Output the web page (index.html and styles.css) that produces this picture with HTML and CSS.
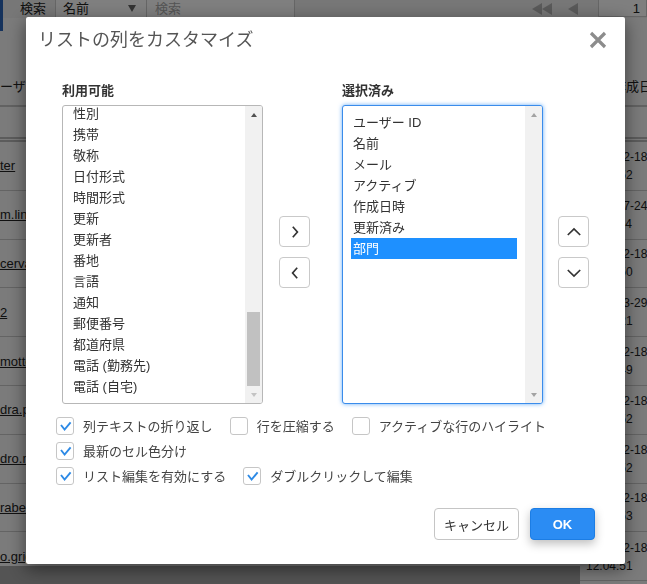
FILE: index.html
```html
<!DOCTYPE html>
<html lang="ja">
<head>
<meta charset="utf-8">
<title>リストの列をカスタマイズ</title>
<link rel="stylesheet" href="styles.css">
</head>
<body>
<div class="page">
  <div class="toolbar">
    <span class="tb-edge"></span>
    <span class="tb-label">検索</span>
    <span class="tb-select">名前<span class="tb-caret"></span></span>
    <span class="tb-input">検索</span>
    <span class="tb-spacer"></span>
    <span class="tb-pager"><span class="tri"></span><span class="tri"></span><span class="tri single"></span></span>
    <span class="tb-page">1</span>
  </div>
  <div class="grid">
    <div class="pane pane-left">
      <div class="g-head">ーザー名</div>
      <div class="g-filter"></div>
      <div class="g-rows">
        <div class="g-row"><a class="lnk">ter</a></div>
        <div class="g-row"><a class="lnk">m.linden</a></div>
        <div class="g-row"><a class="lnk">cervantes</a></div>
        <div class="g-row"><a class="lnk">2</a></div>
        <div class="g-row"><a class="lnk">mottola</a></div>
        <div class="g-row"><a class="lnk">dra.perez</a></div>
        <div class="g-row"><a class="lnk">dro.martin</a></div>
        <div class="g-row"><a class="lnk">rabecca</a></div>
        <div class="g-row"><a class="lnk">o.grigoryan</a></div>
      </div>
      <div class="hscroll"></div>
    </div>
    <div class="pane pane-right">
      <div class="g-head g-head-r">作成日時</div>
      <div class="g-filter"></div>
      <div class="g-row"><span class="dt">2022-12-18<br>12:04:52</span></div>
      <div class="g-row"><span class="dt">2022-07-24<br>10:11:44</span></div>
      <div class="g-row"><span class="dt">2022-12-18<br>12:04:50</span></div>
      <div class="g-row"><span class="dt">2022-03-29<br>09:15:21</span></div>
      <div class="g-row"><span class="dt">2022-12-18<br>12:04:49</span></div>
      <div class="g-row"><span class="dt">2022-12-18<br>12:04:52</span></div>
      <div class="g-row"><span class="dt">2022-12-18<br>12:04:52</span></div>
      <div class="g-row"><span class="dt">2022-12-18<br>12:04:53</span></div>
      <div class="g-row g-row-last"><span class="dt">2022-12-18<br>12:04:51</span></div>
    </div>
  </div>
</div>

<div class="overlay"></div>

<div class="modal" role="dialog" aria-labelledby="m-title">
  <div class="m-head">
    <h2 class="m-title" id="m-title">リストの列をカスタマイズ</h2>
    <button class="m-close" aria-label="閉じる">
      <svg width="18" height="18" viewBox="0 0 18 18"><path d="M2 2L16 16M16 2L2 16" stroke="#8c8c8c" stroke-width="3.2" fill="none"/></svg>
    </button>
  </div>

  <div class="m-body">
    <div class="pickers">
      <div class="pick">
        <div class="pick-label">利用可能</div>
        <div class="listbox">
          <ul class="opts opts-scrolled">
            <li>性別</li>
            <li>携帯</li>
            <li>敬称</li>
            <li>日付形式</li>
            <li>時間形式</li>
            <li>更新</li>
            <li>更新者</li>
            <li>番地</li>
            <li>言語</li>
            <li>通知</li>
            <li>郵便番号</li>
            <li>都道府県</li>
            <li>電話 (勤務先)</li>
            <li>電話 (自宅)</li>
          </ul>
          <div class="vscroll">
            <span class="arr"><span class="tri-up on"></span></span>
            <span class="track"><span class="thumb"></span></span>
            <span class="arr"><span class="tri-down"></span></span>
          </div>
        </div>
      </div>

      <div class="movebtns">
        <button class="iconbtn" aria-label="追加">
          <svg width="12" height="12" viewBox="0 0 12 12"><polyline points="3.8,0.8 8.4,6 3.8,11.2" fill="none" stroke="#333" stroke-width="1.7"/></svg>
        </button>
        <button class="iconbtn" aria-label="削除">
          <svg width="12" height="12" viewBox="0 0 12 12"><polyline points="8.2,0.8 3.6,6 8.2,11.2" fill="none" stroke="#333" stroke-width="1.7"/></svg>
        </button>
      </div>

      <div class="pick pick-right">
        <div class="pick-label">選択済み</div>
        <div class="listbox focused">
          <ul class="opts opts-top">
            <li>ユーザー ID</li>
            <li>名前</li>
            <li>メール</li>
            <li>アクティブ</li>
            <li>作成日時</li>
            <li>更新済み</li>
            <li class="sel">部門</li>
          </ul>
          <div class="vscroll">
            <span class="arr"><span class="tri-up"></span></span>
            <span class="track"></span>
            <span class="arr"><span class="tri-down dim"></span></span>
          </div>
        </div>
      </div>

      <div class="orderbtns">
        <button class="iconbtn" aria-label="上へ">
          <svg width="14" height="12" viewBox="0 0 14 12"><polyline points="0.8,9 7,3 13.2,9" fill="none" stroke="#333" stroke-width="1.7"/></svg>
        </button>
        <button class="iconbtn" aria-label="下へ">
          <svg width="14" height="12" viewBox="0 0 14 12"><polyline points="0.8,3 7,9 13.2,3" fill="none" stroke="#333" stroke-width="1.7"/></svg>
        </button>
      </div>
    </div>

    <div class="checks">
      <div class="check-row">
        <label class="chk"><span class="box"><svg width="16" height="16" viewBox="0 0 16 16"><polyline points="4,7 7.6,11.6 13.6,4.4" fill="none" stroke="#2d8ae6" stroke-width="1.9"/></svg></span>列テキストの折り返し</label>
        <label class="chk"><span class="box"></span>行を圧縮する</label>
        <label class="chk"><span class="box"></span>アクティブな行のハイライト</label>
      </div>
      <div class="check-row">
        <label class="chk"><span class="box"><svg width="16" height="16" viewBox="0 0 16 16"><polyline points="4,7 7.6,11.6 13.6,4.4" fill="none" stroke="#2d8ae6" stroke-width="1.9"/></svg></span>最新のセル色分け</label>
      </div>
      <div class="check-row">
        <label class="chk"><span class="box"><svg width="16" height="16" viewBox="0 0 16 16"><polyline points="4,7 7.6,11.6 13.6,4.4" fill="none" stroke="#2d8ae6" stroke-width="1.9"/></svg></span>リスト編集を有効にする</label>
        <label class="chk"><span class="box"><svg width="16" height="16" viewBox="0 0 16 16"><polyline points="4,7 7.6,11.6 13.6,4.4" fill="none" stroke="#2d8ae6" stroke-width="1.9"/></svg></span>ダブルクリックして編集</label>
      </div>
    </div>
  </div>

  <div class="m-foot">
    <button class="btn btn-cancel">キャンセル</button>
    <button class="btn btn-ok">OK</button>
  </div>
</div>
</body>
</html>
```

FILE: styles.css
```css
* { box-sizing: border-box; }

html, body {
  margin: 0;
  padding: 0;
}

body {
  width: 647px;
  height: 584px;
  overflow: hidden;
  font-family: "Liberation Sans", "Noto Sans CJK JP", sans-serif;
  font-size: 13px;
  color: #333;
  background: #f6f6f6;
}

/* ---------- background page ---------- */
.page {
  width: 647px;
  height: 584px;
  background: #f6f6f6;
  display: flex;
  flex-direction: column;
  overflow: hidden;
}

.toolbar {
  display: flex;
  align-items: flex-start;
  height: 18px;
  flex: none;
  background: #eee;
  font-size: 13px;
  line-height: 17px;
}

.tb-edge {
  width: 3px;
  height: 31px;
  background: #2a64b8;
  flex: none;
}

.tb-label {
  margin-left: 17px;
  width: 35px;
  color: #222;
}

.tb-select {
  width: 92px;
  height: 17px;
  padding-left: 7px;
  border-left: 1px solid #ccc;
  border-right: 1px solid #ccc;
  background: #fff;
  color: #222;
  display: flex;
  align-items: center;
}

.tb-caret {
  margin-left: auto;
  margin-right: 10px;
  width: 0;
  height: 0;
  border-left: 4px solid transparent;
  border-right: 4px solid transparent;
  border-top: 7px solid #666;
}

.tb-input {
  width: 148px;
  height: 17px;
  padding-left: 8px;
  border-right: 1px solid #ccc;
  background: #fff;
  color: #aaa;
}

.tb-spacer { flex: 1; }

.tb-pager {
  display: flex;
  align-items: center;
  height: 17px;
  margin-right: 20px;
}

.tri {
  width: 0;
  height: 0;
  border-top: 6px solid transparent;
  border-bottom: 6px solid transparent;
  border-right: 10px solid #b4b4b4;
}

.tri.single { margin-left: 16px; }

.tb-page {
  width: 49px;
  height: 17px;
  border: 1px solid #ccc;
  border-top: none;
  background: #fff;
  text-align: right;
  padding-right: 6px;
  color: #222;
}

.grid {
  display: flex;
  margin-top: 52px;
  flex: 1;
  min-height: 0;
}

.pane { display: flex; flex-direction: column; }

.pane-left {
  width: 580px;
  flex: none;
  height: 514px;
}

.pane-right {
  flex: 1;
  min-width: 0;
  overflow: hidden;
}

.g-head {
  height: 37px;
  line-height: 34px;
  border-bottom: 2px solid #c4c4c4;
  color: #222;
  white-space: nowrap;
  overflow: hidden;
  flex: none;
}

.g-head-r { padding-left: 33px; }

.g-filter {
  height: 35px;
  border-bottom: 5px double #b8b8b8;
  flex: none;
}

.g-rows {
  flex: 1;
  min-height: 0;
  overflow: hidden;
}

.g-row {
  height: 48.8px;
  border-bottom: 1px solid #c8c8c8;
  display: flex;
  align-items: center;
  white-space: nowrap;
  flex: none;
}

.g-row-last { align-items: flex-start; padding-top: 7px; }

.lnk {
  color: #222;
  text-decoration: underline;
  font-size: 13px;
}

.dt {
  padding-left: 6px;
  font-size: 12px;
  line-height: 18px;
  color: #222;
}

.hscroll {
  height: 18px;
  background: #a8a8a8;
  flex: none;
}

/* ---------- overlay ---------- */
.overlay {
  position: fixed;
  inset: 0;
  background: rgba(0, 0, 0, 0.5);
}

/* ---------- modal ---------- */
.modal {
  position: fixed;
  top: 17px;
  left: 26px;
  width: 599px;
  height: 547px;
  background: #fff;
  border-radius: 2px;
  box-shadow: 0 5px 18px rgba(0, 0, 0, 0.5);
  display: flex;
  flex-direction: column;
}

.m-head {
  height: 34px;
  padding: 12px 17px 0 12px;
  display: flex;
  align-items: center;
  justify-content: space-between;
}

.m-title {
  margin: 0;
  font-size: 18px;
  line-height: 22px;
  font-weight: normal;
  color: #555;
}

.m-close {
  width: 20px;
  height: 22px;
  padding: 0;
  border: none;
  background: none;
  display: flex;
  align-items: center;
  justify-content: center;
}

.m-body {
  padding: 32px 0 0 36px;
}

.pickers {
  display: flex;
  align-items: flex-start;
}

.pick { width: 201px; flex: none; }

.pick-right { margin-left: 32px; }

.pick-label {
  font-weight: bold;
  font-size: 13px;
  line-height: 16px;
  margin-bottom: 6px;
  color: #333;
}

.listbox {
  height: 299px;
  border: 1px solid #b7b7b7;
  border-radius: 3px;
  display: flex;
  overflow: hidden;
  background: #fff;
}

.listbox.focused {
  border-color: #3a8ceb;
  box-shadow: 0 0 4px rgba(40, 140, 245, 0.7);
}

.opts {
  flex: 1;
  min-width: 0;
  list-style: none;
  margin: 0;
  padding: 0 8px;
  font-size: 13px;
  color: #333;
}

.opts-scrolled { margin-top: -3.5px; }

.opts-top { padding-top: 5.5px; }

.opts li {
  line-height: 21px;
  height: 21px;
  padding: 0 2px;
  white-space: nowrap;
}

.opts li.sel {
  background: #1e90ff;
  color: #fff;
}

.vscroll {
  width: 17px;
  flex: none;
  background: #f1f1f1;
  display: flex;
  flex-direction: column;
}

.arr {
  height: 17px;
  flex: none;
  display: flex;
  align-items: center;
  justify-content: center;
}

.tri-up, .tri-down {
  width: 0;
  height: 0;
  border-left: 3.5px solid transparent;
  border-right: 3.5px solid transparent;
}

.tri-up { border-bottom: 4px solid #a3a3a3; }
.tri-up.on { border-bottom-color: #505050; }
.tri-down { border-top: 4px solid #c3c3c3; }
.tri-down.dim { border-top-color: #a3a3a3; }

.track {
  flex: 1;
  display: flex;
  flex-direction: column;
  justify-content: flex-end;
}

.thumb {
  height: 74px;
  margin: 0 2px;
  background: #c1c1c1;
}

.movebtns, .orderbtns {
  display: flex;
  flex-direction: column;
  gap: 10px;
  padding-top: 133px;
  flex: none;
}

.movebtns { margin-left: 16px; }
.orderbtns { margin-left: 15px; }

.iconbtn {
  width: 31px;
  height: 31px;
  padding: 0;
  border: 1px solid #c9c9c9;
  border-radius: 4px;
  background: #fff;
  display: flex;
  align-items: center;
  justify-content: center;
}

.checks {
  margin: 9.5px 0 0 -6px;
}

.check-row {
  display: flex;
  align-items: center;
  height: 25px;
}

.chk {
  display: flex;
  align-items: center;
  margin-right: 17px;
  font-size: 13px;
  line-height: 25px;
  color: #444;
  white-space: nowrap;
}

.box {
  width: 18px;
  height: 18px;
  margin-right: 9px;
  border: 1px solid #c6c6c6;
  border-radius: 3px;
  background: #fff;
  display: flex;
  align-items: center;
  justify-content: center;
  flex: none;
}

.m-foot {
  display: flex;
  justify-content: flex-end;
  gap: 11px;
  padding: 19.5px 30px 0 0;
}

.btn {
  height: 32px;
  padding: 0;
  border-radius: 4px;
  font-family: "Liberation Sans", "Noto Sans CJK JP", sans-serif;
  font-size: 13px;
}

.btn-cancel {
  width: 85px;
  border: 1px solid #c5c5c5;
  background: #fff;
  color: #333;
}

.btn-ok {
  width: 65px;
  border: 1px solid #1c7de4;
  background: #2b8cf3;
  color: #fff;
  font-weight: bold;
  box-shadow: 0 4px 10px rgba(0, 0, 0, 0.25);
}
```
